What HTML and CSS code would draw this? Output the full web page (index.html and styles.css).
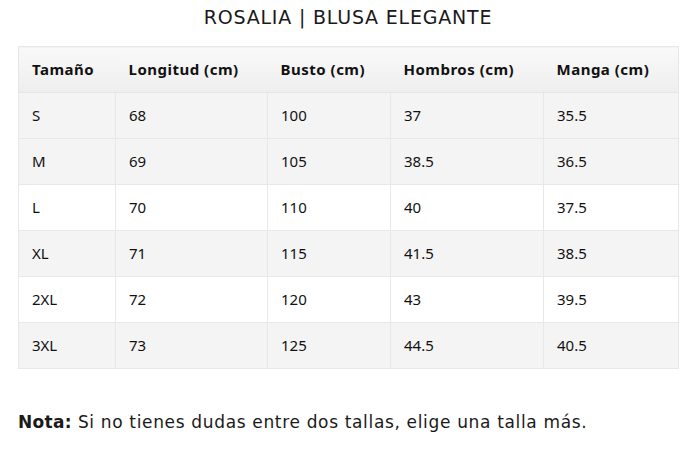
FILE: index.html
```html
<!DOCTYPE html>
<html lang="es">
<head>
<meta charset="utf-8">
<title>Rosalia | Blusa Elegante</title>
<link rel="stylesheet" href="styles.css">
</head>
<body>
<div class="page">
  <h1 class="title">ROSALIA | BLUSA ELEGANTE</h1>
  <table class="size-table">
    <colgroup>
      <col class="c1"><col class="c2"><col class="c3"><col class="c4"><col class="c5">
    </colgroup>
    <thead>
      <tr><th>Tamaño</th><th>Longitud (cm)</th><th>Busto (cm)</th><th>Hombros (cm)</th><th>Manga (cm)</th></tr>
    </thead>
    <tbody>
      <tr class="gray"><td>S</td><td>68</td><td>100</td><td>37</td><td>35.5</td></tr>
      <tr class="gray"><td>M</td><td>69</td><td>105</td><td>38.5</td><td>36.5</td></tr>
      <tr><td>L</td><td>70</td><td>110</td><td>40</td><td>37.5</td></tr>
      <tr class="gray"><td>XL</td><td>71</td><td>115</td><td>41.5</td><td>38.5</td></tr>
      <tr><td>2XL</td><td>72</td><td>120</td><td>43</td><td>39.5</td></tr>
      <tr class="gray"><td>3XL</td><td>73</td><td>125</td><td>44.5</td><td>40.5</td></tr>
    </tbody>
  </table>
  <p class="note"><strong>Nota:</strong> Si no tienes dudas entre dos tallas, elige una talla más.</p>
</div>
</body>
</html>
```
FILE: styles.css
```css
html, body {
  margin: 0;
  padding: 0;
  background: #fff;
}
.page {
  padding: 0 18px;
  color: #111;
}
.title {
  margin: 0;
  padding-top: 5px;
  height: 46px;
  box-sizing: border-box;
  text-align: center;
  font-family: "DejaVu Sans", sans-serif;
  font-weight: 400;
  font-size: 19px;
  letter-spacing: 0.8px;
  line-height: 24px;
  color: #1a1a1a;
}
.size-table {
  width: 660px;
  border-collapse: collapse;
  table-layout: fixed;
  font-family: "Noto Sans", "Open Sans", sans-serif;
  font-size: 15px;
  color: #111;
  border: 1px solid #e6e6e6;
}
.c1 { width: 97px; }
.c2 { width: 152px; }
.c3 { width: 123px; }
.c4 { width: 153px; }
.c5 { width: 135px; }
.size-table th {
  text-align: left;
  font-weight: 700;
  letter-spacing: 0.5px;
  padding: 12px 13px;
  line-height: 21px;
  background: linear-gradient(#f9f9f9, #eeeeee);
  border-bottom: 1px solid #e6e6e6;
}
.size-table td {
  padding: 12px 13px;
  line-height: 21px;
  border: 1px solid #e8e8e8;
  background: #fff;
}
.size-table tr.gray td {
  background: #f4f4f4;
}
.note {
  margin: 41px 0 0;
  font-family: "DejaVu Sans", sans-serif;
  font-size: 17px;
  letter-spacing: 0.66px;
  line-height: 24px;
  color: #1a1a1a;
}
.note strong {
  font-weight: 700;
  letter-spacing: 0.3px;
}
```
